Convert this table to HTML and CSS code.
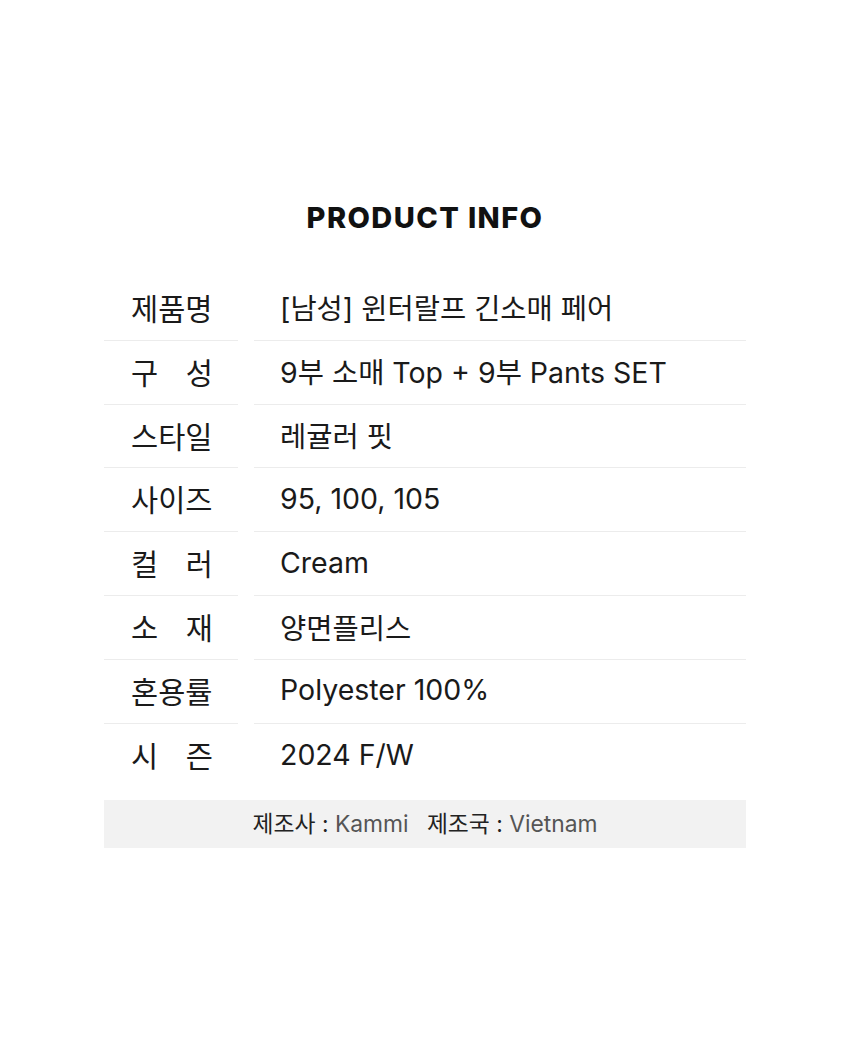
FILE: index.html
```html
<!DOCTYPE html>
<html lang="ko">
  <head>
    <meta charset="UTF-8" />
    <meta name="viewport" content="width=device-width, initial-scale=1.0" />
    <title>Product Info</title>
    <link rel="stylesheet" href="styles.css">
  </head>
  <body>
    <div class="info">
      <h1>PRODUCT INFO</h1>

      <div class="info-list">
        <div class="label"><span>제품명</span></div>
        <div class="value">[남성] 윈터랄프 긴소매 페어</div>

        <div class="label"><span>구 성</span></div>
        <div class="value">9부 소매 Top + 9부 Pants SET</div>

        <div class="label"><span>스타일</span></div>
        <div class="value">레귤러 핏</div>

        <div class="label"><span>사이즈</span></div>
        <div class="value">95, 100, 105</div>

        <div class="label"><span>컬 러</span></div>
        <div class="value">Cream</div>

        <div class="label"><span>소 재</span></div>
        <div class="value">양면플리스</div>

        <div class="label"><span>혼용률</span></div>
        <div class="value">Polyester 100%</div>

        <div class="label last"><span>시 즌</span></div>
        <div class="value last">2024 F/W</div>
      </div>

      <div class="maker">
        <b>제조사 :</b> Kammi
        <b class="gap">제조국 :</b> Vietnam
      </div>
    </div>
  </body>
</html>
```

FILE: styles.css
```css
body {
  margin: 0;
  background-color: #fff;
  color: #1a1a1a;
  font-family: Inter, "Noto Sans CJK KR", sans-serif;
}

.info {
  width: 642px;
  margin: 0 auto;
  padding-top: 199px;
}

h1 {
  margin: 0 0 40px;
  text-align: center;
  font-size: 29px;
  font-weight: 800;
  letter-spacing: 1.4px;
  color: #111;
  line-height: 38px;
}

.info-list {
  display: grid;
  grid-template-columns: 134px 1fr;
  column-gap: 16px;
}

.label,
.value {
  display: flex;
  align-items: center;
  box-sizing: border-box;
  height: 63.83px;
  padding-bottom: 3px;
  border-bottom: 1px solid #ececec;
}

.label.last,
.value.last {
  border-bottom: none;
}

.label {
  padding-left: 27px;
  font-size: 29.5px;
}

.label span {
  display: inline-block;
  width: 82px;
  text-align: justify;
  text-align-last: justify;
}

.value {
  padding-left: 26px;
  font-size: 28.5px;
}

.maker {
  margin-top: 12px;
  height: 48px;
  line-height: 48px;
  background-color: #f2f2f2;
  text-align: center;
  font-size: 22.8px;
  color: #555;
}

.maker b {
  font-weight: 400;
  color: #222;
}

.maker .gap {
  margin-left: 12px;
}
```
